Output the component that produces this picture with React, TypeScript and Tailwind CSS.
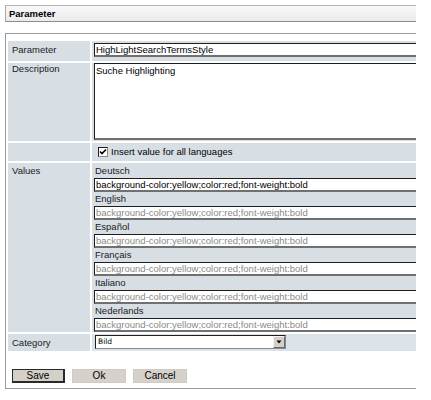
import React from "react";

const langs = ["Deutsch", "English", "Español", "Français", "Italiano", "Nederlands"];
const val = "background-color:yellow;color:red;font-weight:bold";

function Field({ text, gray }: { text: string; gray?: boolean }) {
  return (
    <div
      className={`h-[14px] w-[330px] bg-white border border-[#1e1e1e] border-b-2 border-b-[#707070] pl-[1px] leading-[11px] text-[9.5px] whitespace-nowrap overflow-hidden ${
        gray ? "text-[#8a8a8a]" : "text-black"
      }`}
    >
      {text}
    </div>
  );
}

export default function App() {
  return (
    <div className="w-[431px] h-[400px] bg-white font-['Liberation_Sans',Arial,sans-serif] text-[#1a1a1a] overflow-hidden">
      <div className="w-[416px] overflow-hidden pl-[5px] pt-[5px]">
        <div className="h-[17px] border-t border-l border-b border-t-[#b4b4b4] border-l-[#a8a8a8] border-b-[#8c8c8c] bg-gradient-to-b from-[#f8f8f8] to-[#ebebeb] pl-[3px] text-[9.5px] font-bold leading-[15px] text-black">
          Parameter
        </div>
        <div className="mt-[11px] h-[356px] border-t border-l border-b border-[#9a9a9a] pl-[2px] pt-[7px] overflow-hidden">
          <div className="flex flex-col gap-[2px] text-[9.5px]">
            {/* Parameter row */}
            <div className="flex gap-[2px] h-[20px]">
              <div className="w-[82px] shrink-0 bg-[#d7dfe5] pl-[4px] leading-[18px]">Parameter</div>
              <div className="flex-1 bg-[#d7dfe5] pl-[2px] pt-[2px]">
                <Field text="HighLightSearchTermsStyle" />
              </div>
            </div>
            {/* Description row */}
            <div className="flex gap-[2px] h-[78px]">
              <div className="w-[82px] shrink-0 bg-[#d7dfe5] pl-[4px] leading-[12px]">Description</div>
              <div className="flex-1 bg-[#d7dfe5] pl-[2px]">
                <div className="h-[77px] w-[330px] bg-white border border-[#1e1e1e] border-b-2 border-b-[#707070] pl-[1px] pt-[1px] leading-[12px] text-black">
                  Suche Highlighting
                </div>
              </div>
            </div>
            {/* Checkbox row */}
            <div className="flex gap-[2px] h-[18px]">
              <div className="w-[82px] shrink-0 bg-[#d7dfe5]"></div>
              <div className="flex-1 bg-[#d7dfe5] pl-[6px] flex items-center gap-[3px]">
                <div className="w-[10px] h-[10px] bg-white border border-[#1e1e1e] border-b-[#8a8a8a] border-r-[#8a8a8a] flex items-center justify-center">
                  <svg width="8" height="8" viewBox="0 0 8 8">
                    <path d="M1 3.5 L3 5.5 L7 1.5" stroke="#000" strokeWidth="1.6" fill="none" />
                  </svg>
                </div>
                <span className="leading-[12px] text-black">Insert value for all languages</span>
              </div>
            </div>
            {/* Values row */}
            <div className="flex gap-[2px] h-[169px]">
              <div className="w-[82px] shrink-0 bg-[#d7dfe5] pl-[4px] pt-[1px] leading-[14px]">Values</div>
              <div className="flex-1 bg-[#d7dfe5] pl-[2px] pt-[1px]">
                {langs.map((l, i) => (
                  <div key={l}>
                    <div className="h-[14px] leading-[14px] pl-[1px]">{l}</div>
                    <Field text={val} gray={i > 0} />
                  </div>
                ))}
              </div>
            </div>
            {/* Category row */}
            <div className="flex gap-[2px] h-[17px]">
              <div className="w-[82px] shrink-0 bg-[#d7dfe5] pl-[4px] leading-[17px]">Category</div>
              <div className="flex-1 bg-[#dae2ea] pl-[3px] pt-[1px]">
                <div className="h-[14px] w-[191px] bg-white border border-[#1e1e1e] border-b-[#8a8a8a] border-r-[#8a8a8a] flex items-center">
                  <span className="flex-1 pl-[2px] font-['DejaVu_Sans',Verdana,sans-serif] text-[7.5px] leading-[12px] text-black">Bild</span>
                  <div className="w-[12px] h-[12px] bg-[#d4d0c8] border border-[#f4f4f4] border-b-[#6a6a6a] border-r-[#6a6a6a] flex items-center justify-center">
                    <svg width="6" height="4" viewBox="0 0 6 4">
                      <path d="M0.5 0.5 L5.5 0.5 L3 3.5 Z" fill="#000" />
                    </svg>
                  </div>
                </div>
              </div>
            </div>
          </div>
          {/* Buttons */}
          <div className="flex gap-[7px] ml-[4px] mt-[18px]">
            <button className="w-[53px] h-[14px] bg-[#d4d0c8] border border-[#2a2a2a] border-b-2 border-r-2 text-[10px] leading-[11px] text-black">
              Save
            </button>
            <button className="w-[54px] h-[14px] bg-[#d6d2cb] border border-[#cfcbc4] text-[10px] leading-[12px] text-black">
              Ok
            </button>
            <button className="w-[54px] h-[14px] bg-[#d6d2cb] border border-[#cfcbc4] text-[10px] leading-[12px] text-black">
              Cancel
            </button>
          </div>
        </div>
      </div>
    </div>
  );
}
